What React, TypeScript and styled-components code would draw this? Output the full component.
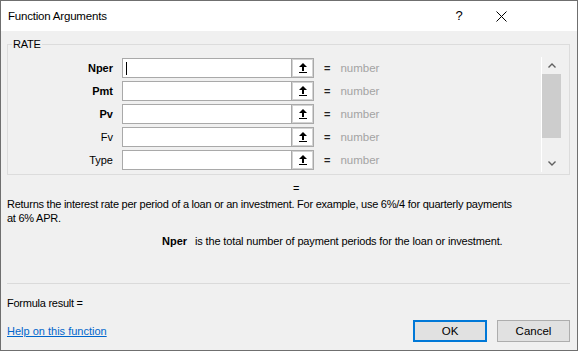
import React from "react";
import styled, { createGlobalStyle } from "styled-components";

const GlobalStyle = createGlobalStyle`
  html, body { margin: 0; padding: 0; background: #ffffff; }
  #root { width: 578px; height: 351px; }
`;

const FONT = `"Liberation Sans", Arial, sans-serif`;

const Window = styled.div`
  width: 578px;
  height: 351px;
  box-sizing: border-box;
  border: 1px solid #6f6f6f;
  background: #f0f0f0;
  display: flex;
  flex-direction: column;
  font-family: ${FONT};
  font-size: 11px;
  letter-spacing: -0.25px;
  color: #000;
  overflow: hidden;
`;

const TitleBar = styled.div`
  height: 30px;
  flex: none;
  background: #ffffff;
  display: flex;
  align-items: center;
  padding-left: 7px;
`;

const Title = styled.div`
  flex: 1;
  font-size: 11.5px;
  letter-spacing: -0.2px;
  line-height: 16px;
`;

const HelpGlyph = styled.div`
  width: 12px;
  text-align: center;
  font-size: 13px;
  line-height: 16px;
  margin-right: 30px;
`;

const CloseBox = styled.div`
  width: 12px;
  height: 12px;
  margin-right: 70px;
  display: flex;
  align-items: center;
  justify-content: center;
`;

const Body = styled.div`
  flex: 1;
  display: flex;
  flex-direction: column;
  padding: 0 7px 0 6px;
`;

const Group = styled.fieldset`
  margin: 6px 0 0 0;
  padding: 5px 8px 2px 0;
  border: 1px solid #dcdcdc;
  min-inline-size: 0;
  display: flex;
`;

const Legend = styled.legend`
  font-size: 11px;
  line-height: 15px;
  padding: 0 1px;
  margin-left: 4px;
`;

const ArgGrid = styled.div`
  flex: 1;
  display: grid;
  grid-template-columns: 105px 192px 1fr;
  grid-auto-rows: 20px;
  row-gap: 3px;
  column-gap: 9px;
  align-items: center;
  padding-top: 1px;
  padding-bottom: 2px;
`;

const ArgLabel = styled.div<{ $bold?: boolean }>`
  text-align: right;
  font-weight: ${(p) => (p.$bold ? 700 : 400)};
  line-height: 20px;
  letter-spacing: 0;
`;

const InputWrap = styled.div`
  display: flex;
  height: 20px;
`;

const TextBox = styled.div<{ $focused?: boolean }>`
  flex: 1;
  box-sizing: border-box;
  border: 1px solid #a9a9a9;
  background: #ffffff;
  position: relative;
  ${(p) =>
    p.$focused
      ? `&::after { content: ""; position: absolute; left: 3px; top: 3px; width: 1px; height: 13px; background: #000; }`
      : ""}
`;

const Collapse = styled.div`
  width: 22px;
  box-sizing: border-box;
  border: 1px solid #a9a9a9;
  border-left: none;
  background: #ffffff;
  display: flex;
  align-items: center;
  justify-content: center;
  box-shadow: inset 0 0 0 1px #d3d3d3;
`;

const ValueCell = styled.div`
  display: flex;
  align-items: center;
  gap: 10px;
  padding-left: 1px;
  line-height: 20px;
  letter-spacing: 0;
`;

const Eq = styled.span`
  font-weight: 700;
  color: #222;
`;

const Hint = styled.span`
  color: #a3a3a3;
  font-size: 11.5px;
`;

const ScrollBar = styled.div`
  width: 19px;
  flex: none;
  display: flex;
  flex-direction: column;
  border-left: 1px solid #ffffff;
`;

const ScrollArrow = styled.div`
  height: 17px;
  display: flex;
  align-items: center;
  justify-content: center;
`;

const Thumb = styled.div`
  height: 64px;
  background: #cdcdcd;
`;

const Track = styled.div`
  flex: 1;
`;

const ResultEq = styled.div`
  padding-left: 286px;
  line-height: 15px;
  margin-top: 6px;
`;

const Description = styled.div`
  line-height: 14px;
  margin-top: 1px;
`;

const ArgHelp = styled.div`
  display: flex;
  gap: 8px;
  padding-left: 155px;
  line-height: 15px;
  margin-top: 9px;
  letter-spacing: -0.15px;
`;

const Bold = styled.span`
  font-weight: 700;
  letter-spacing: 0;
`;

const Spacer = styled.div`
  flex: 1;
`;

const Separator = styled.div`
  height: 1px;
  background: #dadada;
`;

const FormulaResult = styled.div`
  line-height: 15px;
  margin-top: 12px;
`;

const Footer = styled.div`
  display: flex;
  align-items: center;
  height: 22px;
  margin-top: 9px;
  margin-bottom: 8px;
`;

const HelpLink = styled.a`
  flex: 1;
  color: #0066cc;
  text-decoration: underline;
  letter-spacing: 0;
  cursor: pointer;
`;

const Button = styled.button<{ $primary?: boolean }>`
  width: ${(p) => (p.$primary ? "74px" : "73px")};
  height: 22px;
  box-sizing: border-box;
  background: #e1e1e1;
  border: ${(p) => (p.$primary ? "2px solid #0078d7" : "1px solid #adadad")};
  font-family: ${FONT};
  font-size: 11.5px;
  color: #000;
  padding: 0;
  margin-left: 10px;
`;

const UpIcon = () => (
  <svg width="10" height="12" viewBox="0 0 10 12">
    <path d="M5 1 L9 5 L6 5 L6 9 L4 9 L4 5 L1 5 Z" fill="#000" />
    <rect x="1" y="10" width="8" height="1" fill="#000" />
  </svg>
);

const ChevronUp = () => (
  <svg width="8" height="5" viewBox="0 0 8 5">
    <path d="M0.5 4.5 L4 1 L7.5 4.5" fill="none" stroke="#606060" strokeWidth="1.4" />
  </svg>
);

const ChevronDown = () => (
  <svg width="8" height="5" viewBox="0 0 8 5">
    <path d="M0.5 0.5 L4 4 L7.5 0.5" fill="none" stroke="#606060" strokeWidth="1.4" />
  </svg>
);

const args = [
  { name: "Nper", bold: true },
  { name: "Pmt", bold: true },
  { name: "Pv", bold: true },
  { name: "Fv", bold: false },
  { name: "Type", bold: false },
];

export default function App() {
  return (
    <>
      <GlobalStyle />
      <Window>
        <TitleBar>
          <Title>Function Arguments</Title>
          <HelpGlyph>?</HelpGlyph>
          <CloseBox>
            <svg width="11" height="11" viewBox="0 0 11 11">
              <path d="M0.5 0.5 L10.5 10.5 M10.5 0.5 L0.5 10.5" stroke="#000" strokeWidth="1" />
            </svg>
          </CloseBox>
        </TitleBar>
        <Body>
          <Group>
            <Legend>RATE</Legend>
            <ArgGrid>
              {args.map((a, i) => (
                <React.Fragment key={a.name}>
                  <ArgLabel $bold={a.bold}>{a.name}</ArgLabel>
                  <InputWrap>
                    <TextBox $focused={i === 0} />
                    <Collapse>
                      <UpIcon />
                    </Collapse>
                  </InputWrap>
                  <ValueCell>
                    <Eq>=</Eq>
                    <Hint>number</Hint>
                  </ValueCell>
                </React.Fragment>
              ))}
            </ArgGrid>
            <ScrollBar>
              <ScrollArrow>
                <ChevronUp />
              </ScrollArrow>
              <Thumb />
              <Track />
              <ScrollArrow>
                <ChevronDown />
              </ScrollArrow>
            </ScrollBar>
          </Group>
          <ResultEq>=</ResultEq>
          <Description>
            Returns the interest rate per period of a loan or an investment. For example, use 6%/4 for quarterly payments
            <br />
            at 6% APR.
          </Description>
          <ArgHelp>
            <Bold>Nper</Bold>
            <span>is the total number of payment periods for the loan or investment.</span>
          </ArgHelp>
          <Spacer />
          <Separator />
          <FormulaResult>Formula result =</FormulaResult>
          <Footer>
            <HelpLink>Help on this function</HelpLink>
            <Button $primary>OK</Button>
            <Button>Cancel</Button>
          </Footer>
        </Body>
      </Window>
    </>
  );
}
